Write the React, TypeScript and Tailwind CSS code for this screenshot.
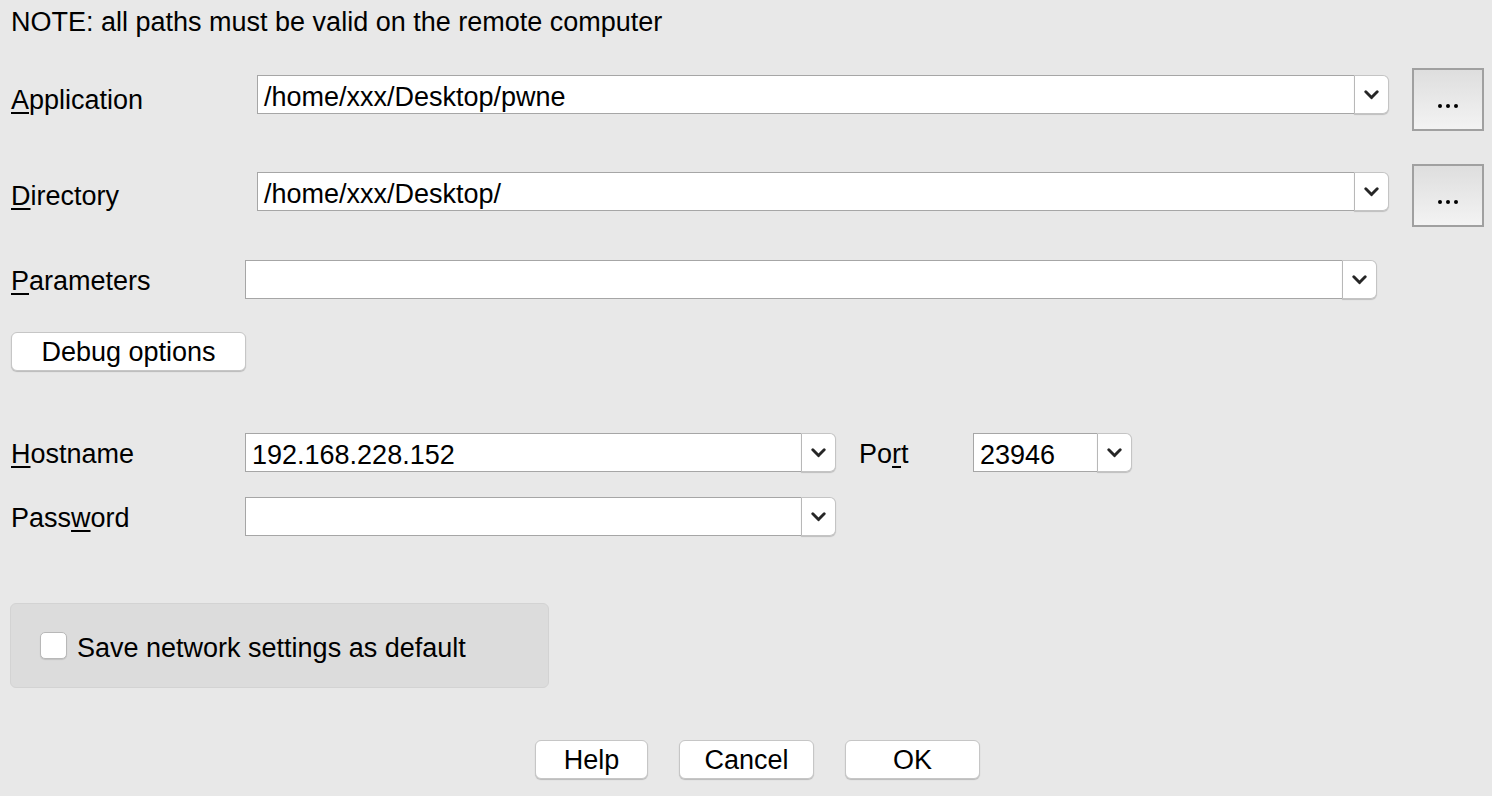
import React from "react";

const font = { fontFamily: '"Liberation Sans", Arial, sans-serif' };

function Chevron() {
  return (
    <svg width="15" height="10" viewBox="0 0 15 10" fill="none">
      <path d="M1.8 1.8L7.5 7.6L13.2 1.8" stroke="#262626" strokeWidth="2.9" strokeLinecap="round" strokeLinejoin="round" />
    </svg>
  );
}

function Combo({ value, className }: { value?: string; className: string }) {
  return (
    <div className={`flex h-[39px] ${className}`}>
      <div className="flex-1 min-w-0 bg-white border border-[#a6a6a6] border-r-0 flex items-center pl-[6px] pt-[6px] text-[27px] leading-none text-black">
        {value}
      </div>
      <div className="w-[35px] shrink-0 bg-white rounded-r-[6px] border border-[#c4c4c4] border-l-[#b8b8b8] shadow-[0_1px_1px_rgba(0,0,0,0.18)] flex items-center justify-center">
        <Chevron />
      </div>
    </div>
  );
}

function DotsButton() {
  return (
    <div className="w-[72px] h-[63px] shrink-0 border-2 border-[#a0a0a0] bg-gradient-to-b from-[#dedede] to-[#f3f3f3] flex items-center justify-center gap-[4px] pt-[12px]">
      <span className="w-[4px] h-[4px] rounded-full bg-black" />
      <span className="w-[4px] h-[4px] rounded-full bg-black" />
      <span className="w-[4px] h-[4px] rounded-full bg-black" />
    </div>
  );
}

function Label({ pre, u, post, className }: { pre?: string; u: string; post: string; className: string }) {
  return (
    <div className={`shrink-0 text-[27px] leading-[28px] text-black ${className}`}>
      {pre}
      <span className="underline decoration-2 underline-offset-[3px]">{u}</span>
      {post}
    </div>
  );
}

function MacButton({ children, className }: { children: React.ReactNode; className: string }) {
  return (
    <div className={`h-[39px] bg-white rounded-[6px] border border-[#c6c6c6] shadow-[0_1px_1px_rgba(0,0,0,0.2)] flex items-center justify-center pt-[2px] text-[27px] leading-none text-black ${className}`}>
      {children}
    </div>
  );
}

export default function App() {
  return (
    <div className="w-[1492px] h-[796px] bg-[#e8e8e8] overflow-hidden flex flex-col pl-[11px]" style={font}>
      <div className="pt-[8px] h-[36px] text-[27px] leading-[28px] text-black">
        NOTE: all paths must be valid on the remote computer
      </div>

      <div className="mt-[32px] flex items-start h-[63px] pr-[8px]">
        <Label u="A" post="pplication" className="w-[246px] mt-[18px]" />
        <Combo value="/home/xxx/Desktop/pwne" className="flex-1 mt-[7px]" />
        <div className="w-[23px] shrink-0" />
        <DotsButton />
      </div>

      <div className="mt-[33px] flex items-start h-[63px] pr-[8px]">
        <Label u="D" post="irectory" className="w-[246px] mt-[18px]" />
        <Combo value="/home/xxx/Desktop/" className="flex-1 mt-[8px]" />
        <div className="w-[23px] shrink-0" />
        <DotsButton />
      </div>

      <div className="mt-[33px] flex items-center h-[39px]">
        <Label u="P" post="arameters" className="w-[234px] mt-[2px]" />
        <Combo className="w-[1132px]" />
      </div>

      <div className="mt-[33px] flex">
        <MacButton className="w-[235px]">Debug options</MacButton>
      </div>

      <div className="mt-[62px] flex items-center h-[39px]">
        <Label u="H" post="ostname" className="w-[234px] mt-[2px]" />
        <Combo value="192.168.228.152" className="w-[591px]" />
        <Label pre="Po" u="r" post="t" className="ml-[23px] w-[114px] mt-[2px]" />
        <Combo value="23946" className="w-[159px]" />
      </div>

      <div className="mt-[25px] flex items-center h-[39px]">
        <Label pre="Pass" u="w" post="ord" className="w-[234px] mt-[2px]" />
        <Combo className="w-[591px]" />
      </div>

      <div className="mt-[67px] -ml-[1px] w-[539px] h-[85px] bg-[#dcdcdc] border border-[#d3d3d3] rounded-[6px] flex items-center pl-[29px]">
        <div className="w-[27px] h-[27px] bg-white border border-[#b8b8b8] rounded-[5px] shadow-[0_1px_1px_rgba(0,0,0,0.12)]" />
        <span className="ml-[10px] pt-[5px] text-[27px] leading-none text-black">Save network settings as default</span>
      </div>

      <div className="mt-[52px] flex pl-[524px] gap-[31px]">
        <MacButton className="w-[113px]">Help</MacButton>
        <MacButton className="w-[135px]">Cancel</MacButton>
        <MacButton className="w-[135px]">OK</MacButton>
      </div>
    </div>
  );
}
